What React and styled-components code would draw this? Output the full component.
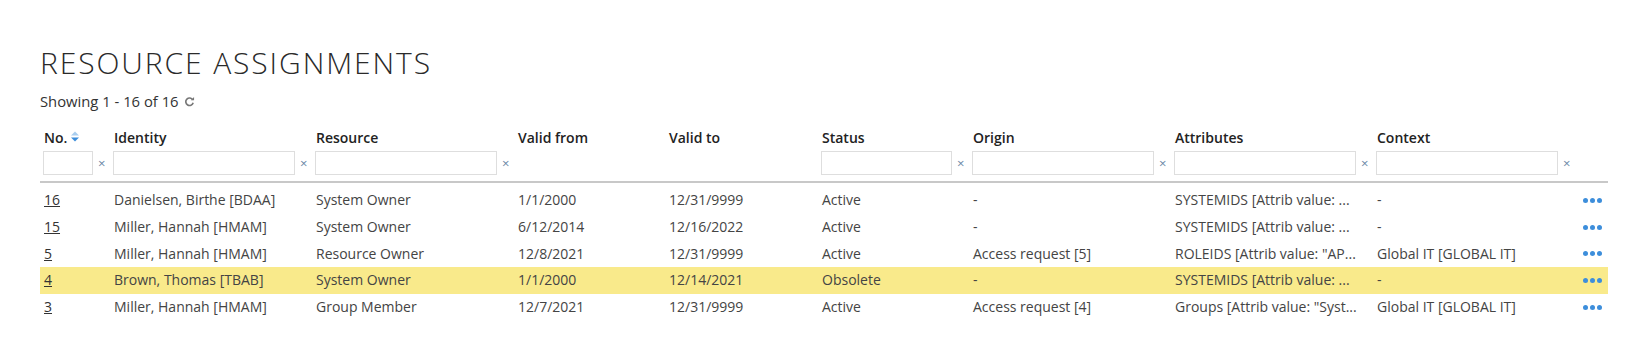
import styled, { createGlobalStyle } from "styled-components";

const GlobalStyle = createGlobalStyle`
  body {
    margin: 0;
    background: #fff;
    font-family: "Open Sans", "Liberation Sans", sans-serif;
    color: #444;
  }
`;

const Page = styled.div`
  padding: 43px 34px 0 40px;
`;

const Title = styled.h1`
  margin: 0;
  font-family: "Open Sans", "Liberation Sans", sans-serif;
  font-weight: 300;
  font-size: 30px;
  line-height: 40px;
  letter-spacing: 1.9px;
  color: #2a2a2a;
`;

const Summary = styled.div`
  display: flex;
  align-items: center;
  gap: 5px;
  margin-top: 8px;
  font-size: 14.8px;
  line-height: 20px;
  color: #333;
`;

const Table = styled.table`
  margin-top: 16px;
  border-collapse: collapse;
  table-layout: fixed;
  width: 1568px;
  font-size: 14px;
`;

const HeadCell = styled.th`
  padding: 0 4px;
  height: 21px;
  text-align: left;
  font-weight: 600;
  font-size: 14px;
  color: #222;
  white-space: nowrap;
  vertical-align: middle;
`;

const FilterRow = styled.tr`
  border-bottom: 2px solid #c8c8c8;
`;

const FilterCell = styled.td`
  padding: 3px 3px 6px 3px;
  height: 24px;
`;

const Filter = styled.div`
  display: flex;
  align-items: center;
  gap: 5px;
`;

const FilterInput = styled.input`
  box-sizing: border-box;
  width: ${(p) => p.$width}px;
  height: 24px;
  border: 1px solid #dedede;
  border-radius: 0;
  outline: none;
  padding: 0 4px;
  font: inherit;
`;

const Clear = styled.span`
  font-size: 13px;
  color: #6d87a6;
  line-height: 1;
`;

const Spacer = styled.tr`
  height: 5px;
`;

const Row = styled.tr`
  background: ${(p) => (p.$highlight ? "#f9ea8b" : "transparent")};
`;

const Cell = styled.td`
  padding: 0 4px;
  height: 26.7px;
  line-height: 18px;
  color: #444;
  white-space: nowrap;
  overflow: hidden;
  vertical-align: middle;
`;

const NumLink = styled.a`
  color: #333;
  text-decoration: underline;
`;

const Dots = styled.span`
  display: flex;
  justify-content: flex-end;
  gap: 2px;
  padding-right: 2px;

  i {
    width: 5px;
    height: 5px;
    border-radius: 50%;
    background: #3d8edb;
  }
`;

const SortIcon = () => (
  <svg width="10" height="11" viewBox="0 0 10 11" style={{ marginLeft: 3, verticalAlign: "top", marginTop: 3 }}>
    <path d="M1 4.6 L5 0.6 L9 4.6 Z" fill="#a9cdee" />
    <path d="M1 6.4 L5 10.4 L9 6.4 Z" fill="#3d8edb" />
  </svg>
);

const RefreshIcon = () => (
  <svg width="11" height="11" viewBox="0 0 12 12">
    <path
      d="M9.6 4.2 A4.1 4.1 0 1 0 10 7.3"
      fill="none"
      stroke="#777"
      strokeWidth="1.8"
    />
    <path d="M7.4 4.6 L11 4.6 L11 1 Z" fill="#777" />
  </svg>
);

const columns = [
  { key: "no", label: "No.", width: 70, filter: 50, sort: true },
  { key: "identity", label: "Identity", width: 202, filter: 182 },
  { key: "resource", label: "Resource", width: 202, filter: 182 },
  { key: "from", label: "Valid from", width: 151 },
  { key: "to", label: "Valid to", width: 153 },
  { key: "status", label: "Status", width: 151, filter: 131 },
  { key: "origin", label: "Origin", width: 202, filter: 182 },
  { key: "attributes", label: "Attributes", width: 202, filter: 182 },
  { key: "context", label: "Context", width: 202, filter: 182 },
  { key: "actions", label: "", width: 33 },
];

const rows = [
  ["16", "Danielsen, Birthe [BDAA]", "System Owner", "1/1/2000", "12/31/9999", "Active", "-", "SYSTEMIDS [Attrib value: ...", "-"],
  ["15", "Miller, Hannah [HMAM]", "System Owner", "6/12/2014", "12/16/2022", "Active", "-", "SYSTEMIDS [Attrib value: ...", "-"],
  ["5", "Miller, Hannah [HMAM]", "Resource Owner", "12/8/2021", "12/31/9999", "Active", "Access request [5]", 'ROLEIDS [Attrib value: "AP...', "Global IT [GLOBAL IT]"],
  ["4", "Brown, Thomas [TBAB]", "System Owner", "1/1/2000", "12/14/2021", "Obsolete", "-", "SYSTEMIDS [Attrib value: ...", "-"],
  ["3", "Miller, Hannah [HMAM]", "Group Member", "12/7/2021", "12/31/9999", "Active", "Access request [4]", 'Groups [Attrib value: "Syst...', "Global IT [GLOBAL IT]"],
];

export default function App() {
  return (
    <Page>
      <GlobalStyle />
      <Title>RESOURCE ASSIGNMENTS</Title>
      <Summary>
        Showing 1 - 16 of 16 <RefreshIcon />
      </Summary>
      <Table>
        <colgroup>
          {columns.map((c) => (
            <col key={c.key} style={{ width: c.width }} />
          ))}
        </colgroup>
        <thead>
          <tr>
            {columns.map((c) => (
              <HeadCell key={c.key}>
                {c.label}
                {c.sort && <SortIcon />}
              </HeadCell>
            ))}
          </tr>
          <FilterRow>
            {columns.map((c) => (
              <FilterCell key={c.key}>
                {c.filter && (
                  <Filter>
                    <FilterInput $width={c.filter} />
                    <Clear>×</Clear>
                  </Filter>
                )}
              </FilterCell>
            ))}
          </FilterRow>
        </thead>
        <tbody>
          <Spacer />
          {rows.map((r) => (
            <Row key={r[0]} $highlight={r[0] === "4"}>
              <Cell>
                <NumLink href="#">{r[0]}</NumLink>
              </Cell>
              {r.slice(1).map((v, i) => (
                <Cell key={i}>{v}</Cell>
              ))}
              <Cell>
                <Dots>
                  <i />
                  <i />
                  <i />
                </Dots>
              </Cell>
            </Row>
          ))}
        </tbody>
      </Table>
    </Page>
  );
}
